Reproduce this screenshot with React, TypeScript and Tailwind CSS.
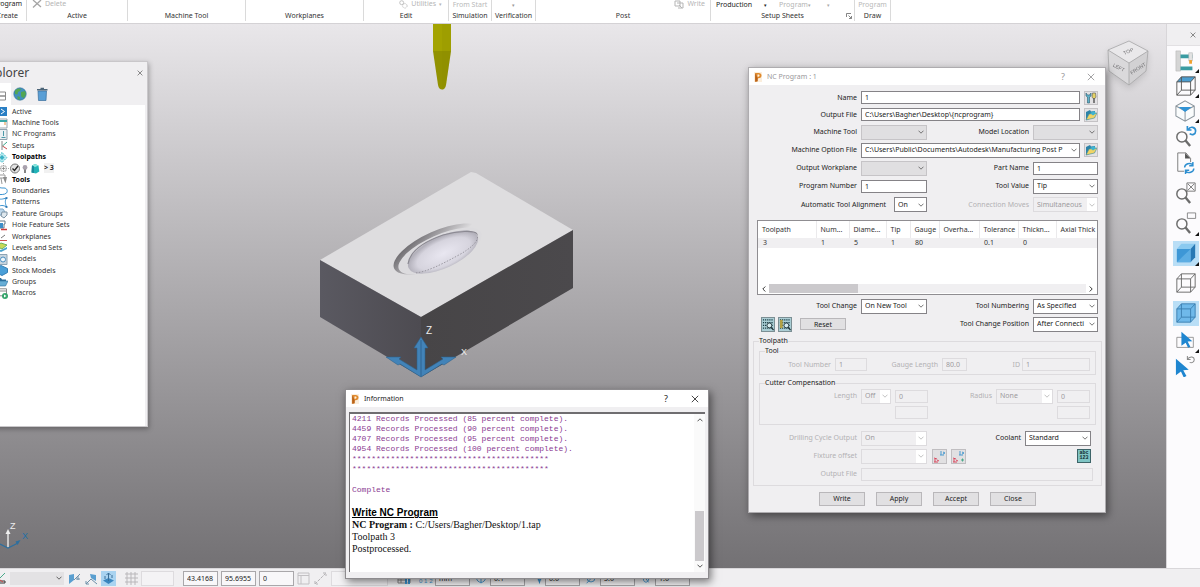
import type { ReactNode } from 'react'
import { clsx } from 'clsx'

type IconProps = { children: ReactNode; className?: string; box?: string }

function Icon({ children, className = 'w-3 h-3', box = '0 0 24 24' }: IconProps) {
  return (
    <svg viewBox={box} fill="none" className={clsx('shrink-0', className)} aria-hidden="true">
      {children}
    </svg>
  )
}

function Chevron({ className = 'stroke-[#555]' }: { className?: string }) {
  return (
    <svg viewBox="0 0 6 4" fill="none" className={clsx('w-[6px] h-1 shrink-0', className)} aria-hidden="true">
      <path d="M.5.7 3 3.2 5.5.7" strokeWidth=".9" />
    </svg>
  )
}

function Logo() {
  return (
    <Icon className="w-2 h-[10px]" box="0 0 8 10">
      <path d="M0 0h8v10H0z" fill="#fbeedd" />
      <path d="M1.2 1h3.4c2 0 2.9 1 2.9 2.6S6.5 6.3 4.6 6.3h-1v2.9l-2.4.5z" fill="#e08a2c" />
      <path d="M3.5 2.6h1c.7 0 1 .3 1 1s-.4 1.1-1 1.1h-1z" fill="#fff1dc" />
      <path d="M1.2 1 3.6 6.3v2.9l-2.4.5z" fill="#b8611a" />
    </Icon>
  )
}

function CloseX({ className = 'stroke-[#333]' }: { className?: string }) {
  return (
    <svg viewBox="0 0 8 8" fill="none" className={clsx('w-2 h-2', className)} aria-hidden="true">
      <path d="M.8.8l6.4 6.4M7.2.8.8 7.2" strokeWidth=".9" />
    </svg>
  )
}

/* ---------- Ribbon ---------- */

type Group = { label: string; width: string; top?: ReactNode; launcher?: boolean; align?: string }

const groups: Group[] = [
  { label: 'Create', width: 'w-[27px]', align: 'justify-end pr-2', top: <span className="flex w-full justify-end pr-1 text-[#222]">Program</span> },
  {
    label: 'Active',
    width: 'w-[101px]',
    top: (
      <span className="flex w-full gap-[3px] pl-[5px] text-[#b5b5b5]">
        <svg viewBox="0 0 10 10" className="w-[10px] h-[10px] stroke-[#a5a5a5]" fill="none" aria-hidden="true">
          <path d="M1 1l8 7M9 1 1 8.5" strokeWidth="1.3" />
        </svg>
        Delete
      </span>
    ),
  },
  { label: 'Machine Tool', width: 'w-[118px]' },
  { label: 'Workplanes', width: 'w-[118px]' },
  {
    label: 'Edit',
    width: 'w-[85px]',
    top: (
      <span className="flex w-full items-center justify-end gap-[3px] pr-[6px] text-[#b5b5b5]">
        <Icon className="w-[9px] h-[9px]" box="0 0 10 10">
          <circle cx="3" cy="3" r="2.2" stroke="#bbb" />
          <circle cx="6.5" cy="6.5" r="2.5" stroke="#bbb" strokeDasharray="1.5 1" />
        </Icon>
        Utilities
        <span className="text-[5px]">▾</span>
      </span>
    ),
  },
  { label: 'Simulation', width: 'w-[43px]', top: <span className="mt-[2px] text-[#b9b9b9]">From Start</span> },
  { label: 'Verification', width: 'w-[44px]', top: <span className="mt-px text-[5px] text-[#999]">▾</span> },
  {
    label: 'Post',
    width: 'w-[175px]',
    top: (
      <span className="flex w-full items-center justify-end gap-[3px] pr-[5px] text-[#b5b5b5]">
        <Icon className="w-[10px] h-[9px]" box="0 0 10 9">
          <path d="M1 1h5v5H1zM3 3h6v5H4" stroke="#b5b5b5" />
          <path d="M5 5l3 3" stroke="#b5b5b5" />
        </Icon>
        Write
      </span>
    ),
  },
  {
    label: 'Setup Sheets',
    width: 'w-[144px]',
    launcher: true,
    top: (
      <span className="flex w-full items-center pl-[5px] pt-[2px] text-[#222]">
        Production
        <span className="ml-3 text-[5px]">▾</span>
        <span className="ml-3 text-[#b5b5b5]">Program</span>
        <span className="text-[5px] text-[#aaa]">▾</span>
        <span className="ml-4 text-[5px] text-[#aaa]">▾</span>
      </span>
    ),
  },
  { label: 'Draw', width: 'w-[36px]', top: <span className="mt-[2px] text-[#b9b9b9]">Program</span> },
]

function Ribbon() {
  return (
    <header className="flex h-6 shrink-0 overflow-hidden border-b border-[#d4d2d5] bg-white pb-[2px]">
      {groups.map((g) => (
        <section key={g.label} className={clsx('relative flex shrink-0 flex-col overflow-hidden border-r border-[#dadada]', g.width)}>
          <div className="-mt-[2px] flex h-3 shrink-0 items-center justify-center whitespace-nowrap">{g.top}</div>
          <div className={clsx('flex h-3 shrink-0 items-center whitespace-nowrap text-[#333]', g.align ?? 'justify-center')}>{g.label}</div>
          {g.launcher && (
            <button aria-label="Open setup sheet options" className="absolute right-[2px] bottom-[2px]">
              <svg viewBox="0 0 6 6" fill="none" className="w-[6px] h-[6px] stroke-[#666]" aria-hidden="true">
                <path d="M.5 4V.5H5M2.5 2.5l2.8 2.800M5.500 3v2.500H3" strokeWidth=".8" />
              </svg>
            </button>
          )}
        </section>
      ))}
    </header>
  )
}

/* ---------- Explorer ---------- */

const tree: { label: string; bold?: boolean; child?: boolean; icon: ReactNode }[] = [
  { label: 'Active', icon: <><path d="M0 1h11v9H0z" fill="#2a7fc4" /><path d="M5 3l3.5 2.5L5 8" stroke="#fff" /></> },
  { label: 'Machine Tools', icon: <><path d="M1 1h10v9H1z" stroke="#9aa5ad" /><path d="M3 2h8v2H3z" fill="#39a7a7" /><path d="M9 4v3" stroke="#e2923c" /></> },
  { label: 'NC Programs', icon: <><path d="M1.5.5H11v10H1.5z" fill="#e9eff2" stroke="#8fa0ac" /><path d="M7.5 2v5M5.500 8.500h4" stroke="#4a98a8" /></> },
  { label: 'Setups', icon: <><path d="M6 1v9" stroke="#888" /><path d="M11 2 6.5 6" stroke="#39a78d" /><path d="M6.5 6 11 9" stroke="#c84848" /></> },
  { label: 'Toolpaths', bold: true, icon: <><path d="M6 .5l5 5-5 5-5-5z" fill="#b7e9ef" stroke="#44bccb" strokeDasharray="2 1" /><path d="M6 3l2.500 2.500L6 8 3.500 5.500z" fill="#38b0c4" /></> },
  { label: '> 3', child: true, icon: null },
  { label: 'Tools', bold: true, icon: <><path d="M3 1h6v3H3zM5 4l1 6" stroke="#999" /><path d="M7 3h4L9.500 9.500 8 6z" fill="#8c8c8c" /></> },
  { label: 'Boundaries', icon: <path d="M0 2.500c3-2 5 0 8-.5 3 0 4 3 2.500 5-2 2-6 1.500-10 1.500" stroke="#3a93d0" /> },
  { label: 'Patterns', icon: <><path d="M1 1c3 2 6 1 9.500 0-2 3-1 6 0 9-3-2-6-2-9.500 0" stroke="#3a93d0" /><path d="M9.500 1h2M9.500 10h2" stroke="#1d6aa8" strokeWidth="1.500" /></> },
  { label: 'Feature Groups', icon: <><path d="M0 1h7l2 3-2 3H0z" fill="#bcd6ea" stroke="#7ba8c9" /><path d="M6 4h5v3l-3 3-3-2z" fill="#dfe8ee" stroke="#7c92a3" /></> },
  { label: 'Hole Feature Sets', icon: <><path d="M2 1h7v3H8v4H3" stroke="#667a88" /><path d="M4 3h3v5H4z" fill="#3d8fc9" /><path d="M5 9.500h6" stroke="#cc3b3b" strokeWidth="1.500" /></> },
  { label: 'Workplanes', icon: <><path d="M1 9.500h10" stroke="#cf5050" /><path d="M5 7l4-3" stroke="#777" /></> },
  { label: 'Levels and Sets', icon: <><path d="M0 7l5 3 6-3V5L5 8z" fill="#4aa3cf" /><path d="M0 4l5-3 6 2-5 4z" fill="#c9d957" stroke="#6fb061" /></> },
  { label: 'Models', icon: <><path d="M1 .5h10v10H1z" fill="#c8d5df" stroke="#8da4b5" /><circle cx="7" cy="5.500" r="2.500" fill="#eef6fb" stroke="#4b8ec0" /></> },
  { label: 'Stock Models', icon: <path d="M5 .5l6.500 3v4l-5.500 3-6-3V3z" fill="#4a9fd8" stroke="#347fb5" /> },
  { label: 'Groups', icon: <><path d="M0 2h5l1 1.500h4V5H0z" fill="#2c6e9c" /><path d="M0 5h12l-2.500 5H0z" fill="#67aed6" stroke="#2c6e9c" strokeWidth=".6" /></> },
  { label: 'Macros', icon: <><path d="M1 .8h9.500v7H1zM1 3h9" stroke="#8b8b8b" /><circle cx="9" cy="8" r="3" fill="#36a56b" /><path d="M8 6.500 10.500 8 8 9.500z" fill="#fff" /></> },
]

function ToolpathIcons() {
  return (
    <Icon className="w-[42px] h-[11px]" box="0 0 42 11">
      <path d="M3.500 0v11M0 5.500h10" stroke="#aaa" strokeDasharray="1 1" />
      <path d="M1 3h5v5H1z" fill="#fff" stroke="#999" strokeWidth=".7" />
      <path d="M2 5.500h3M3.500 4v3" stroke="#777" strokeWidth=".7" />
      <circle cx="15" cy="5.500" r="4.500" fill="#e2e2e2" stroke="#777" />
      <path d="M12.500 5.500l2 2L18 3" stroke="#222" strokeWidth="1.300" />
      <circle cx="25" cy="4.500" r="2.400" fill="#a9a1ad" />
      <path d="M25 6.500V10" stroke="#666" strokeWidth="1.600" />
      <path d="M32 2.500 35 1l3.500 1.500.8 6L36 10.500l-4.500-1z" fill="#22b3b7" />
      <path d="M32 2.500 35 1l3.500 1.500L35 4z" fill="#8ce6df" />
      <path d="M31.500 9.500 32 2.500l2 1v6.500z" fill="#1b8a9c" />
    </Icon>
  )
}

function Explorer() {
  return (
    <aside className="absolute -left-6 top-[61px] flex h-[366px] w-[172px] flex-col border border-[#c9c7ca] bg-[#f0eff1] pr-[2px] shadow-[1px_2px_5px_rgba(0,0,0,0.3)]">
      <div className="flex h-[21px] shrink-0 items-center justify-between pl-[5px] pr-px">
        <h2 className="text-[12px] leading-5 text-[#444]">Explorer</h2>
        <button aria-label="Close explorer">
          <CloseX className="scale-75 stroke-[#555]" />
        </button>
      </div>
      <div className="flex h-[22px] shrink-0 items-center">
        <button aria-label="Tree" className="flex h-full w-[34px] items-center justify-end bg-white pr-[5px]">
          <Icon className="w-3 h-4" box="0 0 12 16">
            <path d="M5 1v5M3 6h8.500v4H3zM3 10h8.500v4H3z" stroke="#8a8a8a" />
          </Icon>
        </button>
        <button aria-label="Web" className="ml-[2px]">
          <Icon className="w-[14px] h-[14px]" box="0 0 14 14">
            <circle cx="7" cy="7" r="6.200" fill="#4290bd" stroke="#2e6f95" strokeWidth=".6" />
            <path d="M2 3.500 5 1.500l3 .5-1 2-2 1-.5 2.500L2 7zM8 5l4-1 1 3-2 4-2.500-1L8 8zM4.500 9l2.500 1-.5 3-2-1z" fill="#53a653" />
          </Icon>
        </button>
        <button aria-label="Recycle bin" className="ml-2">
          <Icon className="w-[14px] h-[14px]" box="0 0 14 14">
            <path d="M3 4h8.500l-.5 9.500H3.500z" fill="#5a9fd6" stroke="#3a6f9c" strokeWidth=".7" />
            <path d="M2 2.800h10.500M5.500 1.500h3.500" stroke="#4b6478" strokeWidth="1.500" />
          </Icon>
        </button>
      </div>
      <ul className="grid flex-1 auto-rows-[minmax(0,1fr)] bg-white pt-px pb-[127px]">
        {tree.map((n) => (
          <li key={n.label} className={clsx('flex items-center whitespace-nowrap', n.child ? 'gap-[2px] pl-[23px]' : 'gap-1 pl-[19px]', n.bold || n.child ? 'text-black' : 'text-[#333]', n.bold && 'font-bold')}>
            {n.child ? <ToolpathIcons /> : <Icon className="w-3 h-[11px]" box="0 0 12 11">{n.icon}</Icon>}
            <span className={clsx(n.child && 'bg-[#f1f1f1] font-medium')}>{n.label}</span>
          </li>
        ))}
      </ul>
    </aside>
  )
}

/* ---------- 3D view ---------- */

function Model() {
  return (
    <svg viewBox="0 0 290 230" className="absolute left-[300px] top-[136px] w-[290px] h-[230px]" role="img" aria-label="Machined block">
      <defs>
        <linearGradient id="leftFace" x1="0" y1="0" x2="1" y2="0">
          <stop offset="0" stopColor="#5a5961" />
          <stop offset="1" stopColor="#4d4b51" />
        </linearGradient>
        <linearGradient id="rightFace" x1="0" y1="0" x2="1" y2="0">
          <stop offset="0" stopColor="#474547" />
          <stop offset="1" stopColor="#4b494c" />
        </linearGradient>
        <radialGradient id="dome" cx=".5" cy=".55">
          <stop offset="0" stopColor="#e9e7f1" />
          <stop offset=".75" stopColor="#d6d4de" />
          <stop offset="1" stopColor="#b3b1bb" />
        </radialGradient>
        <linearGradient id="groove" gradientUnits="userSpaceOnUse" x1="125" y1="66" x2="142" y2="108">
          <stop offset="0" stopColor="#6b696d" />
          <stop offset=".3" stopColor="#9b999d" />
          <stop offset=".75" stopColor="#dedddf" />
        </linearGradient>
      </defs>
      <path d="M20 100 171 12l5 1 97 57-152 87z" fill="#dedddf" />
      <path d="M20 100l101 57v60L20 157z" fill="url(#leftFace)" />
      <path d="M121 157l152-87v58l-152 89z" fill="url(#rightFace)" />
      <ellipse cx="138" cy="89" rx="48" ry="18" transform="rotate(-24 138 89)" fill="url(#groove)" />
      <ellipse cx="140" cy="91" rx="45" ry="16" transform="rotate(-24 140 91)" fill="#dcdbde" />
      <ellipse cx="143" cy="92" rx="38" ry="16" transform="rotate(-25 143 92)" fill="url(#dome)" />
      <path d="M108 104c2-14 18-23 35-29 15-4 31-5 34-1" fill="none" stroke="#8b8992" strokeWidth="1.200" />
      <path d="M177 74c3 6-5 14-20 22-15 8-30 16-42 17" fill="none" stroke="#8b8992" strokeWidth=".8" strokeDasharray="1.500 1.500" />
      <path d="M86 197h15l-2 2 18 11v-22h-3l7-11 7 11h-3v22l18-11-2-2h15l-12 8-2-1-21 13-21-13-2 1z" fill="#4283b8" stroke="#2e638f" strokeWidth=".6" />
      <path d="M121 180v36" stroke="#2f6592" strokeWidth="1" />
      <text x="126" y="174" fontSize="10" fill="#eee" fontFamily="Liberation Sans, sans-serif">Z</text>
      <text x="161" y="195" fontSize="9" fill="#eee" fontFamily="Liberation Sans, sans-serif">X</text>
    </svg>
  )
}

function Cutter() {
  return (
    <svg viewBox="0 0 20 67" className="absolute left-[432px] top-0 w-5 h-[67px]" aria-hidden="true">
      <path d="M1 0h18v27H1z" fill="#a3a300" />
      <path d="M1 27h18l-5 34c-1 6-7 6-8 0z" fill="#929200" />
      <path d="M10 0h9v27l-5 34c-1 3-2 5-4 5z" fill="#8a8a00" fillOpacity=".2" />
    </svg>
  )
}

function ViewCube() {
  return (
    <svg viewBox="0 0 46 50" className="absolute right-[15px] top-[15px] w-[46px] h-[50px] drop-shadow-md" role="img" aria-label="View cube">
      <path d="M3 11 24 2l19 10-19 12z" fill="#e9e8ea" />
      <path d="M3 11l21 13v22L4 32z" fill="#dad9db" />
      <path d="M43 12 24 24v22l17-14z" fill="#d2d1d3" />
      <path d="M3 11 24 2l19 10-2 20-17 14L4 32zM3 11l21 13 19-12M24 24v22" fill="none" stroke="#a5a4a6" strokeWidth=".8" />
      <g fill="#6f6e71" fontSize="5" fontFamily="Liberation Sans, sans-serif" textAnchor="middle">
        <text transform="translate(24 14) rotate(-22)">TOP</text>
        <text transform="translate(13 30) rotate(27)">LEFT</text>
        <text transform="translate(34 31) rotate(-33)">FRONT</text>
      </g>
    </svg>
  )
}

function AxisTriad() {
  return (
    <svg viewBox="0 0 32 32" className="absolute left-0 bottom-[14px] w-8 h-8" aria-hidden="true">
      <path d="M8 26V10" stroke="#eee" strokeWidth="1.400" />
      <path d="M5.500 12 8 7l2.500 5z" fill="#eee" />
      <path d="M0 22l8 4 10-5" stroke="#2e6f9e" strokeWidth="1.200" fill="none" />
      <path d="M15.500 19.500l5-1.500-3 5z" fill="#2e6f9e" />
      <text x="10" y="7" fontSize="9" fill="#eee" fontFamily="Liberation Sans, sans-serif">Z</text>
      <text x="22" y="17" fontSize="9" fill="#2470a6" fontFamily="Liberation Sans, sans-serif">X</text>
    </svg>
  )
}

/* ---------- Right toolbar ---------- */

const magnifier = (
  <>
    <circle cx="7.500" cy="13" r="5.500" stroke="#6c6c6c" strokeWidth="1.600" />
    <path d="M11.500 17l5 6" stroke="#6c6c6c" strokeWidth="2.600" />
  </>
)

const wireCube = <path d="M2 7.500h15V22H2zM7 2h15v14.500H7zM2 7.500 7 2M17 7.500 22 2M17 22l5-5.500M2 22l5-5.500" />

const cursor = 'M0 0l14 12-6 .5 3.500 6.500-3 1.500L5.500 14 0 18z'

const tools: { name: string; slot: string; active?: boolean; menu?: boolean; icon: ReactNode }[] = [
  { name: 'Machine view', slot: 'h-[25px]', menu: true, icon: <><path d="M1 1h5v22H1z" fill="#d5d5d5" stroke="#b5b5b5" strokeWidth=".6" /><path d="M6 5h13v4H6zM6 18h13v4H6z" fill="#3a9ba2" /><path d="M15 3h4v9h-4z" fill="#e3e3e3" stroke="#aaa" strokeWidth=".5" /><path d="M15.500 11h3v4h-3z" fill="#f0a02c" /></> },
  { name: 'View from top', slot: 'h-[25px]', menu: true, icon: <><path d="M2 7.500h15L22 2H7z" fill="#4b9dd0" /><g stroke="#555" strokeWidth="1">{wireCube}</g></> },
  { name: 'Isometric view', slot: 'h-[25px]', menu: true, icon: <><path d="M11 1l10 5.500v11L11 23 1 17.500v-11zM1 6.500 11 12l10-5.500M11 12v11" stroke="#8a949c" strokeWidth="1.100" fill="#fafcfd" /><path d="M4 7.500h14L11 13z" fill="#2f93d6" /></> },
  { name: 'Previous view', slot: 'h-[25px]', icon: <>{magnifier}<path d="M14.500 5c2-4 8-3 8 1.500 0 4-4 5-6.500 3M13.500 1v4.500H18" stroke="#2e8fd0" strokeWidth="1.800" /></> },
  { name: 'Refresh', slot: 'h-[30px]', icon: <><path d="M3 1h9l5 6v4M3 1v20h7" stroke="#777" strokeWidth="1" /><path d="M11 1v6h6z" fill="#555" /><path d="M10.500 17c0-4 6-6 9-3M20.500 18c0 4-6 6-9 3M19.500 11v4h-4M11.500 24v-4h4" stroke="#2e8fd0" strokeWidth="1.600" /></> },
  { name: 'Zoom to fit', slot: 'h-[30px]', icon: <>{magnifier}<path d="M13 1h9v9h-9zM14 2l7 7M21 2l-7 7" stroke="#666" strokeWidth=".9" /></> },
  { name: 'Zoom box', slot: 'h-[30px]', menu: true, icon: <>{magnifier}<path d="M13.500 1h9v6h-9z" stroke="#777" strokeWidth=".9" /></> },
  { name: 'Shading', slot: 'h-[30px]', active: true, menu: true, icon: <><path d="M2 7.500h15V22H2z" fill="#3d97d6" /><path d="M2 7.500 7 2h15l-5 5.500z" fill="#8bcaf0" /><path d="M17 7.500 22 2v14.500L17 22z" fill="#2878b4" /><path d="M2 22 17 7.500V22z" fill="#5cade3" /></> },
  { name: 'Wireframe', slot: 'h-[30px]', icon: <g stroke="#666" strokeWidth="1">{wireCube}</g> },
  { name: 'Block', slot: 'h-[30px]', active: true, icon: <><path d="M2 7.500 7 2h15v14.500L17 22H2z" fill="#6fb9ea" /><g stroke="#3b7fb0" strokeWidth="1">{wireCube}</g></> },
  { name: 'Box select', slot: 'h-[25px]', menu: true, icon: <><path d="M2 8h18v11H2z" stroke="#888" strokeWidth=".9" /><path d={cursor} transform="translate(7 2) scale(.85)" fill="#1f86d0" /></> },
  { name: 'Clear selection', slot: 'h-[25px]', icon: <><path d={cursor} transform="translate(1 4)" fill="#1f86d0" /><path d="M14 4c3-3 7-2 7 1s-3 4-5 3M13.500 1v4H17" stroke="#888" strokeWidth="1.100" /></> },
]

function ViewToolbar() {
  return (
    <nav aria-label="View" className="flex w-[34px] shrink-0 flex-col items-center border-l border-[#d8d6d9] bg-[#fcfbfd]">
      <div className="flex h-[22px] w-full shrink-0 items-center justify-end border-b border-[#e2e0e3] bg-[#f0eff1] pr-[3px]">
        <button aria-label="Close view toolbar">
          <CloseX className="scale-75 stroke-[#555]" />
        </button>
      </div>
      <div className="flex flex-col pt-[2px] pl-1">
        {tools.map((t) => (
          <div key={t.name} className={clsx('flex items-center', t.slot)}>
            <button aria-label={t.name} className={clsx('relative flex h-[25px] w-[26px] items-center justify-center', t.active && 'bg-[#b9def6]')}>
              <Icon className="w-[22px] h-[22px]">{t.icon}</Icon>
              {t.menu && <span className="absolute right-0 bottom-0 border-4 border-t-0 border-r-0 border-transparent border-b-[#111]" />}
            </button>
          </div>
        ))}
      </div>
    </nav>
  )
}

/* ---------- NC Program dialog ---------- */

function Label({ id, children, muted }: { id: string; children: ReactNode; muted?: boolean }) {
  return (
    <label htmlFor={id} className={clsx('whitespace-nowrap text-right', muted ? 'text-[#b3b1b4]' : 'text-[#222]')}>
      {children}
    </label>
  )
}

function TextBox({ id, value = '', className, disabled, label }: { id: string; value?: string; className?: string; disabled?: boolean; label?: string }) {
  return (
    <input
      id={id}
      type="text"
      defaultValue={value}
      disabled={disabled}
      aria-label={label}
      className={clsx('h-[13px] min-w-0 border px-[3px] outline-none', disabled ? 'border-[#dddbde] bg-[#f0eff1] text-[#9c9a9d]' : 'border-[#858387] bg-white text-[#222]', className)}
    />
  )
}

type ComboProps = { id: string; value?: string; className?: string; look?: 'normal' | 'empty' | 'disabled' }

function Combo({ id, value = '', className, look = 'normal' }: ComboProps) {
  return (
    <div className={clsx('relative flex h-[15px] min-w-0', className)}>
      <select
        id={id}
        defaultValue={value}
        disabled={look === 'disabled'}
        className={clsx(
          'w-full appearance-none border py-0 pl-[3px] pr-[8px] opacity-100 outline-none',
          look === 'normal' && 'border-[#858387] bg-white text-[#222]',
          look === 'empty' && 'border-[#c6c4c7] bg-[#e0dfe1]',
          look === 'disabled' && 'border-[#dddbde] bg-[#f0eff1] text-[#9c9a9d]',
        )}
      >
        <option>{value}</option>
      </select>
      <span className={clsx('pointer-events-none absolute inset-y-px right-px flex w-[10px] items-center justify-center', look === 'disabled' && 'bg-white')}>
        <Chevron className={look === 'disabled' ? 'stroke-[#bbb]' : 'stroke-[#666]'} />
      </span>
    </div>
  )
}

function FolderButton({ label }: { label: string }) {
  return (
    <button type="button" aria-label={label} className="flex h-[14px] w-[14px] items-center justify-center border border-[#c4c2c5] bg-[#e3e2e4]">
      <Icon className="w-3 h-3" box="0 0 12 12">
        <path d="M1 3l4-2 1 1.500 4-.5v6L1 11z" fill="#2d83a8" />
        <path d="M1 11 4 5l8-1-2.500 5z" fill="#f1d465" stroke="#3b8a9c" strokeWidth=".6" />
        <path d="M5 4l4-2 2 2.500-3 2z" fill="#3fb3cf" />
      </Icon>
    </button>
  )
}

const row = 'flex h-[18px] items-center gap-1'
const leftCol = 'flex w-[100px] shrink-0 justify-end'

const columns = [
  { title: 'Toolpath', width: 'w-[58px]', value: '3' },
  { title: 'Num...', width: 'w-[33px]', value: '1' },
  { title: 'Diame...', width: 'w-[37px]', value: '5' },
  { title: 'Tip', width: 'w-[24px]', value: '1' },
  { title: 'Gauge', width: 'w-[29px]', value: '80' },
  { title: 'Overha...', width: 'w-[40px]', value: '' },
  { title: 'Tolerance', width: 'w-[39px]', value: '0.1' },
  { title: 'Thickn...', width: 'w-[38px]', value: '0' },
  { title: 'Axial Thick', width: 'w-[42px]', value: '' },
]

function ToolpathTable() {
  return (
    <div className="mt-[6px] flex h-[75px] flex-col overflow-hidden border border-[#8f8d91] bg-white">
      <div className="flex-1 overflow-hidden">
        <table className="w-[340px] table-fixed text-left text-[#333]">
          <thead>
            <tr className="h-[17px]">
              {columns.map((c) => (
                <th key={c.title} className={clsx('border-r border-[#ebeaec] py-0 pr-0 pl-1 font-normal whitespace-nowrap last:border-r-0', c.width)}>
                  {c.title}
                </th>
              ))}
            </tr>
          </thead>
          <tbody>
            <tr className="h-[10px] bg-[#f0eff1]">
              {columns.map((c) => (
                <td key={c.title} className="py-0 pr-0 pl-[5px]">
                  {c.value}
                </td>
              ))}
            </tr>
          </tbody>
        </table>
      </div>
      <div className="flex h-[11px] items-center justify-between px-[3px]">
        <Chevron className="rotate-90 stroke-[#222]" />
        <div className="mx-[2px] h-[9px] flex-1 bg-[#f0eff1]">
          <div className="h-full w-[28%] bg-[#cbc9cc]" />
        </div>
        <Chevron className="-rotate-90 stroke-[#222]" />
      </div>
    </div>
  )
}

function GridIcon({ tool }: { tool?: boolean }) {
  return (
    <Icon className="w-[12px] h-[13px]" box="0 0 13 14">
      <path d="M0 0h13v14H0z" fill="#a9cdd4" />
      <path d="M1 2h11M1 5h11M1 8h11M1 11h11" stroke="#173a42" strokeWidth="1.300" strokeDasharray="1.300 1" />
      {tool && <path d="M1 2h3v9H1z" fill="#b3a145" />}
      <circle cx="8" cy="8" r="2.600" fill="#d8edf0" stroke="#1a2d33" strokeWidth=".9" />
      <path d="M10 10l2.500 3" stroke="#1a2d33" strokeWidth="1.300" />
    </Icon>
  )
}

function FixtureIcon({ plus }: { plus?: boolean }) {
  return (
    <Icon className="w-[13px] h-[13px]" box="0 0 13 13">
      <path d="M8 1v4M7 5h4M10 2l2 1-2 1" stroke="#4a9bd0" />
      <path d="M1 8l3 1M2 9v3M1 12h4M4 10l2 1" stroke="#d9485f" />
      {plus && <path d="M9 10h3M10.500 8.500v3" stroke="#4aa98a" />}
    </Icon>
  )
}

const pushButton = 'border border-[#b9b7ba] bg-[#e1e0e2] text-[#222]'
const iconButton = 'flex h-[15px] w-[15px] items-center justify-center border border-[#c0bec1] bg-[#e1e0e2]'

function NcProgramDialog() {
  return (
    <div role="dialog" aria-label="NC Program : 1" className="absolute left-[748px] top-[67px] w-[358px] border border-[#aeacaf] bg-[#f0eff1] pb-[6px] shadow-[2px_3px_8px_rgba(0,0,0,0.45)]">
      <div className="flex h-[17px] items-center bg-white pl-[5px] pr-[10px] text-[#9a989b]">
        <Logo />
        <h2 className="ml-[5px] flex-1">NC Program : 1</h2>
        <button aria-label="Help" className="mr-[22px] text-[9px]">?</button>
        <button aria-label="Close dialog">
          <CloseX className="stroke-[#9a989b]" />
        </button>
      </div>

      <form className="pt-1 pr-[3px] pl-1" onSubmit={(e) => e.preventDefault()}>
        <div className="pr-1 pl-1">
          <div className="flex h-[17px] items-center gap-1">
            <div className={leftCol}><Label id="name">Name</Label></div>
            <TextBox id="name" value="1" className="flex-1" />
            <button aria-label="Preferences" type="button" className="flex h-[14px] w-[14px] items-center justify-center border border-[#c4c2c5] bg-[#e3e2e4]">
              <Icon className="w-3 h-3" box="0 0 12 12">
                <path d="M1 1v3l1.500 1v6h2V5L6 4V1L4.500 3h-2z" fill="#5fb2c9" stroke="#2d5d70" strokeWidth=".6" />
                <path d="M7.500 1h3l.5 4-1 1.500H8L7 5z" fill="#e4d266" stroke="#555" strokeWidth=".6" />
                <path d="M9 6.500V11" stroke="#444" strokeWidth="1.300" />
              </Icon>
            </button>
          </div>
          <div className="flex h-[17px] items-center gap-1">
            <div className={leftCol}><Label id="output">Output File</Label></div>
            <TextBox id="output" value="C:\Users\Bagher\Desktop\{ncprogram}" className="flex-1" />
            <FolderButton label="Choose output file" />
          </div>
          <div className={row}>
            <div className={leftCol}><Label id="machine">Machine Tool</Label></div>
            <Combo id="machine" look="empty" className="w-[66px]" />
            <span className="flex-1" />
            <Label id="location">Model Location</Label>
            <Combo id="location" look="empty" className="w-[65px]" />
          </div>
          <div className={row}>
            <div className={leftCol}><Label id="option">Machine Option File</Label></div>
            <Combo id="option" value="C:\Users\Public\Documents\Autodesk\Manufacturing Post P" className="flex-1" />
            <FolderButton label="Choose machine option file" />
          </div>
          <div className={row}>
            <div className={leftCol}><Label id="workplane">Output Workplane</Label></div>
            <Combo id="workplane" look="empty" className="w-[66px]" />
            <span className="flex-1" />
            <Label id="part">Part Name</Label>
            <TextBox id="part" value="1" className="w-[65px]" />
          </div>
          <div className={row}>
            <div className={leftCol}><Label id="number">Program Number</Label></div>
            <TextBox id="number" value="1" className="w-[66px]" />
            <span className="flex-1" />
            <Label id="value">Tool Value</Label>
            <Combo id="value" value="Tip" className="w-[65px]" />
          </div>
          <div className="flex h-[19px] items-center gap-1">
            <div className="flex w-[133px] shrink-0 justify-end pr-1"><Label id="align">Automatic Tool Alignment</Label></div>
            <Combo id="align" value="On" className="w-[33px]" />
            <span className="flex-1" />
            <Label id="moves" muted>Connection Moves</Label>
            <Combo id="moves" value="Simultaneous" look="disabled" className="w-[65px]" />
          </div>

          <ToolpathTable />

          <div className={clsx(row, 'mt-[2px]')}>
            <div className={leftCol}><Label id="change">Tool Change</Label></div>
            <Combo id="change" value="On New Tool" className="w-[66px]" />
            <span className="flex-1" />
            <Label id="numbering">Tool Numbering</Label>
            <Combo id="numbering" value="As Specified" className="w-[65px]" />
          </div>
          <div className={row}>
            <button type="button" aria-label="Inspect toolpaths" className="ml-1 border border-[#7c8f94]"><GridIcon /></button>
            <button type="button" aria-label="Inspect tools" className="-ml-px border border-[#7c8f94]"><GridIcon tool /></button>
            <button type="button" className={clsx('ml-1 h-3 w-[46px] leading-[9px]', pushButton)}>Reset</button>
            <span className="flex-1" />
            <Label id="position">Tool Change Position</Label>
            <Combo id="position" value="After Connecti" className="w-[65px]" />
          </div>
        </div>

        <fieldset className="mt-[3px] border border-[#dddbde] px-[5px] pb-[2px]">
          <legend className="ml-0 px-0 text-[#222]">Toolpath</legend>
          <fieldset className="border border-[#dddbde] pr-[5px] pb-px text-[#b3b1b4]">
            <legend className="ml-[5px] text-[#222]">Tool</legend>
            <div className="flex h-[17px] items-center gap-1">
              <div className="flex w-[71px] justify-end"><Label id="toolNumber" muted>Tool Number</Label></div>
              <TextBox id="toolNumber" value="1" disabled className="w-8" />
              <div className="flex w-[67px] justify-end"><Label id="gauge" muted>Gauge Length</Label></div>
              <TextBox id="gauge" value="80.0" disabled className="w-[25px]" />
              <span className="flex-1" />
              <Label id="toolId" muted>ID</Label>
              <TextBox id="toolId" value="1" disabled className="-ml-[2px] w-[68px]" />
            </div>
          </fieldset>
          <fieldset className="mt-[3px] border border-[#dddbde] pr-[5px] pb-1">
            <legend className="ml-[5px] text-[#222]">Cutter Compensation</legend>
            <div className="flex h-4 items-center gap-1">
              <div className="flex w-[97px] justify-end"><Label id="length" muted>Length</Label></div>
              <Combo id="length" value="Off" look="disabled" className="w-[30px]" />
              <TextBox id="lengthValue" label="Length value" value="0" disabled className="w-[33px]" />
              <span className="flex-1" />
              <Label id="radius" muted>Radius</Label>
              <Combo id="radius" value="None" look="disabled" className="w-[57px]" />
              <TextBox id="radiusValue" label="Radius value" value="0" disabled className="w-[33px]" />
            </div>
            <div className="flex h-4 items-center justify-between pl-[135px]">
              <TextBox id="lengthOffset" label="Length offset" disabled className="w-[33px]" />
              <TextBox id="radiusOffset" label="Radius offset" disabled className="w-[33px]" />
            </div>
          </fieldset>
          <div className={clsx(row, 'mt-1 pr-[5px]')}>
            <div className="flex w-[98px] shrink-0 justify-end"><Label id="drilling" muted>Drilling Cycle Output</Label></div>
            <Combo id="drilling" value="On" look="disabled" className="w-[66px]" />
            <span className="flex-1" />
            <Label id="coolant">Coolant</Label>
            <Combo id="coolant" value="Standard" className="w-[66px]" />
          </div>
          <div className={clsx(row, 'pr-[5px]')}>
            <div className="flex w-[98px] shrink-0 justify-end"><Label id="fixture" muted>Fixture offset</Label></div>
            <Combo id="fixture" look="disabled" className="w-[66px]" />
            <button type="button" aria-label="Pick fixture offset" className={clsx(iconButton, 'ml-px')}><FixtureIcon /></button>
            <button type="button" aria-label="Add fixture offset" className={iconButton}><FixtureIcon plus /></button>
            <span className="flex-1" />
            <button type="button" aria-label="Edit comments" className="flex h-[14px] w-[14px] flex-col items-center justify-center border border-[#3d6468] bg-[#7fc4c4] font-['Liberation_Mono',monospace] text-[5px] leading-[5px] font-bold text-[#10282c]">
              <span>abc</span>
              <span>123</span>
            </button>
          </div>
          <div className={clsx(row, 'pr-[3px]')}>
            <div className="flex w-[98px] shrink-0 justify-end"><Label id="outFile" muted>Output File</Label></div>
            <TextBox id="outFile" disabled className="flex-1" />
          </div>
        </fieldset>

        <div className="mt-[6px] flex justify-center gap-[11px]">
          {['Write', 'Apply', 'Accept', 'Close'].map((text) => (
            <button key={text} type="button" className={clsx('h-[14px] w-[46px]', pushButton)}>
              {text}
            </button>
          ))}
        </div>
      </form>
    </div>
  )
}

/* ---------- Information dialog ---------- */

const records = [
  '4211 Records Processed (85 percent complete).',
  '4459 Records Processed (90 percent complete).',
  '4707 Records Processed (95 percent complete).',
  '4954 Records Processed (100 percent complete).',
  '*****************************************',
  '*****************************************',
]

function InformationDialog() {
  return (
    <div role="dialog" aria-label="Information" className="absolute left-[345px] top-[389px] w-[364px] border border-[#8d8b8e] bg-[#f0eff1] px-[3px] pb-[6px] shadow-[2px_3px_8px_rgba(0,0,0,0.5)]">
      <div className="-mx-[3px] flex h-[17px] items-center bg-white pl-[5px] pr-[9px] text-[#222]">
        <Logo />
        <h2 className="ml-[5px] flex-1">Information</h2>
        <button aria-label="Help" className="mr-[23px] text-[9px]">?</button>
        <button aria-label="Close information">
          <CloseX />
        </button>
      </div>
      <div className="mt-[5px] flex h-[160px] border-t-2 border-l border-[#6f6d70] bg-white">
        <div className="flex-1 pl-[2px]">
          <div className="font-['Liberation_Mono',monospace] text-[8px] leading-[10px] text-[#8a3a92]">
            {records.map((line, i) => (
              <p key={i}>{line}</p>
            ))}
            <p className="mt-[11px]">Complete</p>
          </div>
          <h3 className="mt-3 font-['Liberation_Sans',sans-serif] text-[10px] leading-3 font-bold text-black underline">Write NC Program</h3>
          <div className="font-['Liberation_Serif',serif] text-[10px] leading-3 text-[#111]">
            <p><b>NC Program : </b>C:/Users/Bagher/Desktop/1.tap</p>
            <p>Toolpath 3</p>
            <p>Postprocessed.</p>
          </div>
        </div>
        <div className="flex w-[11px] flex-col items-center justify-between bg-[#fafafa] py-1">
          <Chevron className="rotate-180 stroke-[#444]" />
          <div className="flex w-[9px] flex-1 flex-col justify-end py-[3px]">
            <div className="h-[50px] bg-[#cbc9cc]" />
          </div>
          <Chevron className="stroke-[#444]" />
        </div>
      </div>
    </div>
  )
}

/* ---------- Status bar ---------- */

const tolerances = [
  {
    name: 'Units',
    value: 'mm',
    icon: (
      <>
        <path d="M1 3h14" stroke="#888" />
        <text x="0" y="13" fontSize="7" fill="#3a93d0" fontFamily="Liberation Sans, sans-serif">0 1 2</text>
      </>
    ),
  },
  { name: 'Tolerance', value: '0.1', icon: <><circle cx="8" cy="7" r="5" stroke="#3a93d0" /><path d="M8 2v11" stroke="#3a93d0" /></> },
  { name: 'Thickness', value: '0.0', icon: <path d="M2 7h6M9 4l3 8 2-8M10 9h4" stroke="#3a93d0" strokeWidth="1.300" /> },
  { name: 'Diameter', value: '5.0', icon: <><circle cx="8" cy="7" r="4.500" stroke="#3a93d0" /><path d="M3 13 14 1" stroke="#3a93d0" /></> },
  { name: 'Tip radius', value: '1.0', icon: <><path d="M5 2v6c0 5 6 5 6 0V2" stroke="#3a93d0" /><path d="M8 8l3 4" stroke="#3a93d0" /></> },
]

function StatusBar() {
  const field = 'h-[15px] w-[35px] shrink-0 border border-[#a9a7aa] bg-[#f8f7f9] px-[3px] text-[#222]'
  return (
    <footer className="flex h-[19px] shrink-0 items-center overflow-hidden border-t border-[#d9d7da] bg-[#f0eff1]">
      <Icon className="w-[6px] h-3" box="0 0 6 12">
        <path d="M0 6 5 1" stroke="#4aa98a" />
        <path d="M0 9h5v2H0" stroke="#333" />
        <path d="M0 8l3 2" stroke="#d04848" />
      </Icon>
      <div className="relative ml-1 flex h-[13px] w-[54px] shrink-0">
        <select aria-label="Active workplane" className="w-full appearance-none bg-[#e3e2e4]"><option /></select>
        <span className="pointer-events-none absolute inset-y-0 right-[2px] flex items-center"><Chevron /></span>
      </div>
      <div className="ml-[3px] flex shrink-0 items-center gap-[2px]">
        <button aria-label="Workplane YZ" className="flex w-[15px] justify-center">
          <Icon className="w-[13px] h-[13px]" box="0 0 13 13">
            <path d="M1 3l5-1v6l-5 4z" fill="#5a9fd0" />
            <path d="M6 8l6-6M8 7h4M10 4v4" stroke="#6d8fa8" />
          </Icon>
        </button>
        <button aria-label="Workplane XZ" className="flex w-[15px] justify-center">
          <Icon className="w-[13px] h-[13px]" box="0 0 13 13">
            <path d="M5 2l6 1v6L6 6z" fill="#5a9fd0" />
            <path d="M1 12l5-5 6 5M1 9v3h3" stroke="#6d8fa8" />
          </Icon>
        </button>
        <button aria-label="Workplane XY" className="flex h-[15px] w-[15px] items-center justify-center bg-[#a9d3f0]">
          <Icon className="w-[13px] h-[13px]" box="0 0 13 13">
            <path d="M1 8.500 6.500 6 12 8.500 6.500 12z" fill="#3a86bf" />
            <path d="M6.500 9V1M4.500 3l2-2 2 2M3 4v3M10 3v3" stroke="#3a6f98" />
          </Icon>
        </button>
      </div>
      <button aria-label="Snap to grid" className="ml-[9px] shrink-0">
        <Icon className="w-[13px] h-[13px]" box="0 0 13 13">
          <path d="M0 2h13M0 6h13M0 10h13M2 0v13M6 0v13M10 0v13" stroke="#b9b7ba" />
        </Icon>
      </button>
      <input aria-label="Grid spacing" disabled className="ml-[3px] h-[15px] w-[33px] shrink-0 border border-[#dddbde] bg-[#f4f3f5]" />
      <div className="ml-[9px] flex shrink-0 gap-[3px]">
        <input aria-label="X coordinate" defaultValue="43.4168" className={field} />
        <input aria-label="Y coordinate" defaultValue="95.6955" className={field} />
        <input aria-label="Z coordinate" defaultValue="0" className={field} />
      </div>
      <div className="ml-[3px] flex shrink-0 items-center gap-1">
        <Icon className="w-[13px] h-[13px]" box="0 0 13 13">
          <path d="M1 1h11v11H1zM1 3.500h11M4 4v8" stroke="#c2c0c3" />
        </Icon>
        <Icon className="w-[13px] h-[13px]" box="0 0 13 13">
          <path d="M1 12 12 1M1 9v3h3M9 1h3v3" stroke="#b5b3b6" strokeDasharray="3 1" />
        </Icon>
        <input aria-label="Distance" disabled className="h-[15px] w-[57px] border border-[#dddbde] bg-[#f4f3f5]" />
      </div>
      <Icon className="mr-1 ml-[9px] w-[14px] h-[14px]" box="0 0 14 14">
        <path d="M1 1h12v11H1zM1 5h7M1 9h7M4 2v10" stroke="#888" />
        <path d="M9 4v9M12 4v9" stroke="#3a93d0" strokeWidth="2" />
      </Icon>
      {tolerances.map((t) => (
        <div key={t.name} className="ml-1 flex shrink-0 items-center gap-[2px]">
          <Icon className="w-[14px] h-[14px]" box="0 0 16 14">{t.icon}</Icon>
          <input aria-label={t.name} defaultValue={t.value} className={field} />
        </div>
      ))}
    </footer>
  )
}

export default function App() {
  return (
    <div className="relative flex h-screen flex-col overflow-hidden bg-[#f0eff1] font-['Noto_Sans','Open_Sans',sans-serif] text-[7px] leading-[10px]">
      <Ribbon />
      <div className="flex min-h-0 flex-1">
        <main className="relative min-w-0 flex-1 overflow-hidden bg-linear-to-b from-[#e9e7ea] to-[#737174]">
          <Cutter />
          <Model />
          <ViewCube />
          <AxisTriad />
        </main>
        <ViewToolbar />
      </div>
      <StatusBar />
      <Explorer />
      <NcProgramDialog />
      <InformationDialog />
    </div>
  )
}
